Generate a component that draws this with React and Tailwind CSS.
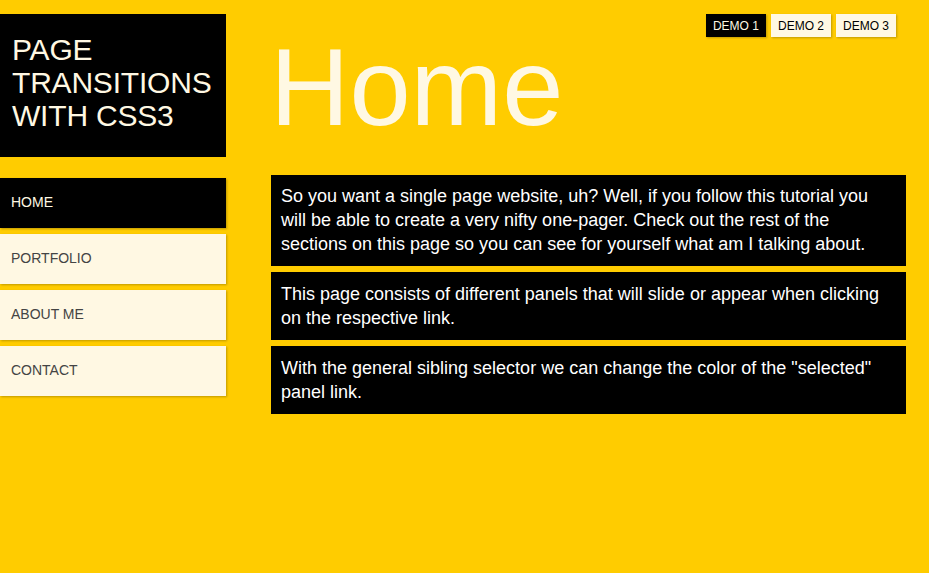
export default function App() {
  const nav = ["HOME", "PORTFOLIO", "ABOUT ME", "CONTACT"];
  return (
    <div className="w-[929px] h-[573px] bg-[#ffcc00] overflow-hidden relative" style={{ fontFamily: '"Liberation Sans", Arial, sans-serif' }}>
      <div className="flex">
        <div className="w-[226px] shrink-0 pt-[14px]">
          <div className="bg-black h-[143px] px-[12px] pt-[19px]">
            <h1 className="text-[#fff8e3] text-[30px] leading-[33px] font-normal tracking-[-0.2px]">PAGE<br />TRANSITIONS<br />WITH CSS3</h1>
          </div>
          <div className="mt-[21px] flex flex-col gap-[6px]">
            {nav.map((n, i) => (
              <div key={n} className={`h-[50px] flex items-center pl-[11px] pb-[2px] text-[14px] shadow-[1px_1px_2px_rgba(0,0,0,0.25)] ${i === 0 ? "bg-black text-[#fff8e3]" : "bg-[#fff8e3] text-[#444]"}`}>{n}</div>
            ))}
          </div>
        </div>
        <div className="ml-[45px] w-[635px] shrink-0">
          <div className="h-[175px] pt-[23px]">
            <div className="text-[#fff8e3] text-[110px] leading-[128px] -ml-[1px]">Home</div>
          </div>
          <div className="flex flex-col gap-[6px] text-white text-[18px] leading-[24px]">
            <div className="bg-black px-[10px] pt-[9px] pb-[10px]">So you want a single page website, uh? Well, if you follow this tutorial you will be able to create a very nifty one-pager. Check out the rest of the sections on this page so you can see for yourself what am I talking about.</div>
            <div className="bg-black px-[10px] pt-[10px] pb-[10px]">This page consists of different panels that will slide or appear when clicking on the respective link.</div>
            <div className="bg-black px-[10px] pt-[10px] pb-[10px]">With the general sibling selector we can change the color of the "selected" panel link.</div>
          </div>
        </div>
      </div>
      <div className="absolute top-[14px] right-[33px] flex gap-[5px] text-[12px]">
        {["DEMO 1", "DEMO 2", "DEMO 3"].map((d, i) => (
          <div key={d} className={`h-[23px] px-[7px] flex items-center shadow-[1px_1px_2px_rgba(0,0,0,0.25)] ${i === 0 ? "bg-black text-[#fff8e3]" : "bg-[#fff8e3] text-black"}`}>{d}</div>
        ))}
      </div>
    </div>
  );
}
